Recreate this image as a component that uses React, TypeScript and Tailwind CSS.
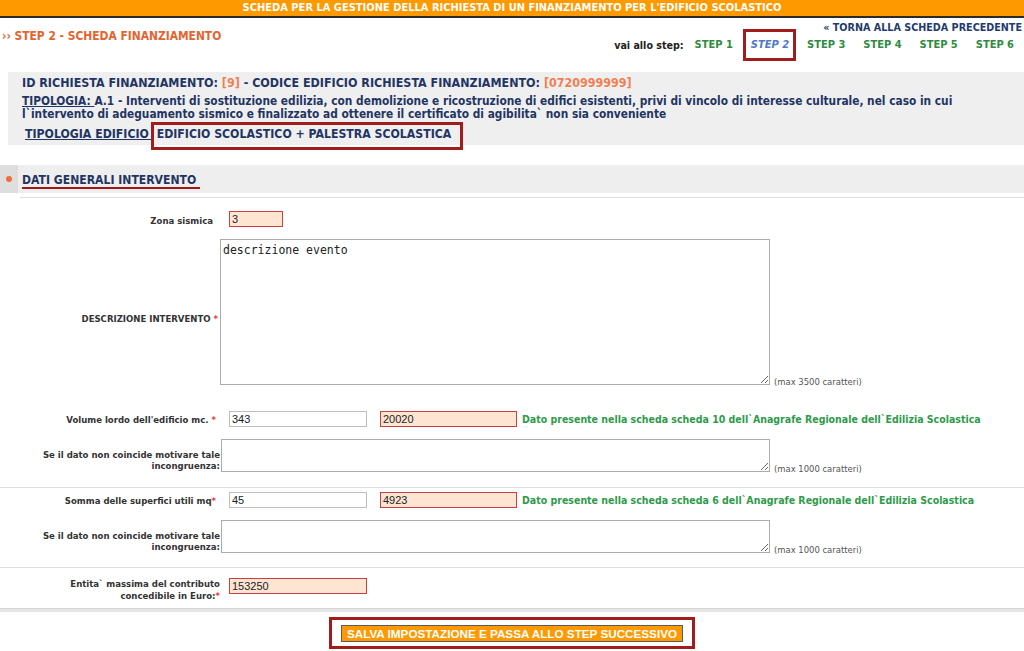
import React from 'react'

const steps = ['STEP 1', 'STEP 2', 'STEP 3', 'STEP 4', 'STEP 5', 'STEP 6']

function Star() {
  return <span className="text-[#e0443c]"> *</span>
}

function TextInput({ value, warn, width }: { value: string; warn?: boolean; width: string }) {
  return (
    <input
      readOnly
      defaultValue={value}
      className={`${width} h-[16px] border px-[2px] font-['Liberation_Sans',Arial,sans-serif] text-[11px] font-normal leading-[14px] text-[#222] outline-none ${
        warn ? 'border-[#c94040] bg-[#fde5d2]' : 'border-[#bdbdbd] bg-white'
      }`}
    />
  )
}

export default function App() {
  return (
    <div className="min-h-[651px] w-[1024px] overflow-hidden bg-white font-['DejaVu_Sans_Condensed','DejaVu_Sans',sans-serif] font-bold">
      {/* barra titolo */}
      <div className="flex h-[18px] items-center justify-center border-b-2 border-[#2a2a2a] bg-[#ff9900] text-[11px] leading-[12px] text-white">
        SCHEDA PER LA GESTIONE DELLA RICHIESTA DI UN FINANZIAMENTO PER L'EDIFICIO SCOLASTICO
      </div>

      {/* navigazione step */}
      <div className="flex h-[54px] justify-between">
        <div className="pl-[2px] pt-[11px] text-[11.9px] leading-[14px] text-[#e4632f]">›› STEP 2 - SCHEDA FINANZIAMENTO</div>
        <div className="flex flex-col items-end pt-[3px] text-[11px] leading-[14px]">
          <span className="pr-[2px] text-[10.7px] text-[#1f3b6f]">« TORNA ALLA SCHEDA PRECEDENTE</span>
          <div className="mt-[3px] flex items-center gap-[18px] pr-[10px]">
            <span className="mr-[-7px] text-[10.6px] text-[#222]">vai allo step:</span>
            {steps.map((s) =>
              s === 'STEP 2' ? (
                <span key={s} className="relative italic text-[#4f78c6]">
                  {s}
                  <span className="absolute -bottom-[9px] -left-[8px] -right-[7px] -top-[9px] border-[3px] border-[#a31c1c]" />
                </span>
              ) : (
                <span key={s} className="text-[#2e8b40]">
                  {s}
                </span>
              )
            )}
          </div>
        </div>
      </div>

      {/* riepilogo richiesta */}
      <div className="ml-[8px] bg-[#efefef] px-[14px] pb-[4px] pt-[4px] text-[#1f3563]">
        <div className="text-[12.4px] leading-[14px]">
          ID RICHIESTA FINANZIAMENTO: <span className="text-[#ef7f52]">[9]</span> - CODICE EDIFICIO RICHIESTA FINANZIAMENTO:{' '}
          <span className="text-[#ef7f52]">[0720999999]</span>
        </div>
        <div className="mt-[5px] text-[11.8px] leading-[13px]">
          <span className="underline">TIPOLOGIA: </span>A.1 - Interventi di sostituzione edilizia, con demolizione e ricostruzione di edifici
          esistenti, privi di vincolo di interesse culturale, nel caso in cui
          <br />
          l`intervento di adeguamento sismico e finalizzato ad ottenere il certificato di agibilita` non sia conveniente
        </div>
        <div className="mt-[6px] pl-[3px] text-[12.2px] leading-[14px]">
          <span className="underline">TIPOLOGIA EDIFICIO </span>
          <span className="relative ml-[4px]">
            EDIFICIO SCOLASTICO + PALESTRA SCOLASTICA
            <span className="absolute -bottom-[9px] -left-[6px] -right-[12px] -top-[5px] border-[3px] border-[#a31c1c]" />
          </span>
        </div>
      </div>

      {/* intestazione sezione */}
      <div className="mt-[20px] flex h-[28px] items-center bg-[#eeeeee]">
        <div className="flex h-full w-[18px] items-center justify-center bg-[#dedede]">
          <span className="h-[6px] w-[6px] rounded-full bg-[#ef6d3b]" />
        </div>
        <span className="ml-[4px] mt-[3px] border-b-2 border-[#a01818] pr-[4px] text-[12.1px] leading-[14px] text-[#1f3563]">
          DATI GENERALI INTERVENTO
        </span>
      </div>
      <div className="ml-[20px] mt-[4px] h-px bg-[#dddddd]" />

      {/* form */}
      <div className="text-[9.5px] leading-[12px] text-[#333]">
        <div className="mt-[13px] flex">
          <div className="w-[218px] pr-[5px] pt-[4px] text-right">Zona sismica</div>
          <div className="ml-[11px]">
            <TextInput value="3" warn width="w-[54px]" />
          </div>
        </div>

        <div className="mt-[12px] flex items-end">
          <div className="mt-[14px] w-[218px] self-center text-right">
            DESCRIZIONE INTERVENTO
            <Star />
          </div>
          <textarea
            readOnly
            defaultValue="descrizione evento"
            className="ml-[2px] h-[146px] w-[550px] resize border border-[#ababab] px-[2px] pt-[3px] font-['DejaVu_Sans_Mono',monospace] text-[11.5px] font-normal leading-[14px] text-[#222] outline-none"
          />
          <span className="mb-[-3px] ml-[4px] text-[9.4px] font-normal text-[#555]">(max 3500 caratteri)</span>
        </div>

        <div className="mt-[26px] flex items-center">
          <div className="mt-[1px] w-[216px] text-right">
            Volume lordo dell'edificio mc.
            <Star />
          </div>
          <div className="ml-[13px] flex items-center">
            <TextInput value="343" width="w-[138px]" />
            <div className="ml-[13px]">
              <TextInput value="20020" warn width="w-[137px]" />
            </div>
            <span className="ml-[5px] text-[10.5px] text-[#2e9b4a]">
              Dato presente nella scheda scheda 10 dell`Anagrafe Regionale dell`Edilizia Scolastica
            </span>
          </div>
        </div>

        <div className="mt-[12px] flex items-end">
          <div className="mb-[1px] w-[220px] text-right leading-[11px]">
            Se il dato non coincide motivare tale
            <br />
            incongruenza:
          </div>
          <textarea readOnly className="ml-[1px] h-[33px] w-[549px] resize border border-[#ababab] outline-none" />
          <span className="mb-[-3px] ml-[4px] text-[9.4px] font-normal text-[#555]">(max 1000 caratteri)</span>
        </div>

        <div className="mt-[15px] h-px bg-[#dddddd]" />

        <div className="mt-[4px] flex items-center">
          <div className="mt-[1px] w-[216px] text-right">
            Somma delle superfici utili mq
            <span className="text-[#e0443c]">*</span>
          </div>
          <div className="ml-[13px] flex items-center">
            <TextInput value="45" width="w-[138px]" />
            <div className="ml-[13px]">
              <TextInput value="4923" warn width="w-[137px]" />
            </div>
            <span className="ml-[5px] text-[10.5px] text-[#2e9b4a]">
              Dato presente nella scheda scheda 6 dell`Anagrafe Regionale dell`Edilizia Scolastica
            </span>
          </div>
        </div>

        <div className="mt-[12px] flex items-end">
          <div className="mb-[1px] w-[220px] text-right leading-[11px]">
            Se il dato non coincide motivare tale
            <br />
            incongruenza:
          </div>
          <textarea readOnly className="ml-[1px] h-[33px] w-[549px] resize border border-[#ababab] outline-none" />
          <span className="mb-[-3px] ml-[4px] text-[9.4px] font-normal text-[#555]">(max 1000 caratteri)</span>
        </div>

        <div className="mt-[14px] h-px bg-[#dddddd]" />

        <div className="mt-[10px] flex items-start">
          <div className="w-[220px] text-right">
            Entita` massima del contributo
            <br />
            concedibile in Euro:<span className="text-[#e0443c]">*</span>
          </div>
          <div className="ml-[9px]">
            <TextInput value="153250" warn width="w-[138px]" />
          </div>
        </div>

        <div className="mt-[6px] h-[4px] border-t border-[#d4d4d4] bg-[#e6e6e6]" />

        <div className="mt-[5px] flex justify-center">
          <div className="border-[3px] border-[#a31c1c] px-[9px] pb-[4px] pt-[5px]">
            <button className="flex h-[17px] w-[342px] items-center justify-center border border-[#5a5a5a] bg-[#ff9900] font-['Liberation_Sans',Arial,sans-serif] text-[11.7px] font-bold text-white">
              SALVA IMPOSTAZIONE E PASSA ALLO STEP SUCCESSIVO
            </button>
          </div>
        </div>
      </div>
    </div>
  )
}
